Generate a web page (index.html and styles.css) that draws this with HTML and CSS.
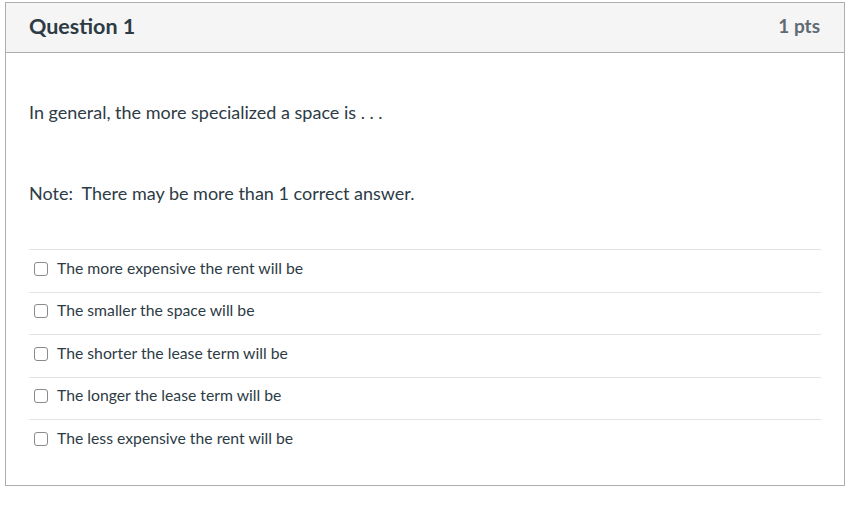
FILE: index.html
```html
<!DOCTYPE html>
<html>
<head>
<meta charset="utf-8">
<link rel="stylesheet" href="styles.css">
</head>
<body>
<div class="question">
  <div class="header">
    <h2 class="title">Question 1</h2>
    <span class="pts">1 pts</span>
  </div>
  <div class="content">
    <p class="text first">In general, the more specialized a space is . . .</p>
    <p class="text second">Note:&nbsp; There may be more than 1 correct answer.</p>
    <div class="answers">
      <label class="answer"><span class="box"></span>The more expensive the rent will be</label>
      <label class="answer"><span class="box"></span>The smaller the space will be</label>
      <label class="answer"><span class="box"></span>The shorter the lease term will be</label>
      <label class="answer"><span class="box"></span>The longer the lease term will be</label>
      <label class="answer"><span class="box"></span>The less expensive the rent will be</label>
    </div>
  </div>
</div>
</body>
</html>
```
FILE: styles.css
```css
html, body {
  margin: 0;
  padding: 0;
  background: #ffffff;
}
body {
  padding: 2px 0 0 5px;
  font-family: Lato, "Open Sans", sans-serif;
  color: #2d3b45;
}
.question {
  width: 838px;
  border: 1px solid #aeaeae;
}
.header {
  height: 50px;
  box-sizing: border-box;
  background: #f5f5f5;
  border-bottom: 1px solid #aeaeae;
  display: flex;
  align-items: center;
  justify-content: space-between;
  padding: 0 24px 4px 23px;
}
.title {
  margin: 0;
  font-size: 21.5px;
  font-weight: 700;
  color: #2d3b45;
}
.pts {
  font-size: 19px;
  font-weight: 700;
  color: #606a72;
}
.content {
  padding: 0 23px 23px 23px;
}
.text {
  margin: 0;
  font-size: 18px;
  line-height: 24px;
}
.first {
  padding-top: 47px;
}
.second {
  padding-top: 57px;
}
.answers {
  margin-top: 44px;
}
.answer {
  display: flex;
  align-items: center;
  height: 35.5px;
  padding: 0 0 6px 5px;
  border-top: 1px solid #e3e3e3;
  font-size: 15.75px;
  line-height: 20px;
  color: #2d3b45;
}
.box {
  width: 12px;
  height: 12px;
  border: 1px solid #8a8a8a;
  border-radius: 3px;
  margin: 2px 9px 0 0;
  background: #fff;
}
```
